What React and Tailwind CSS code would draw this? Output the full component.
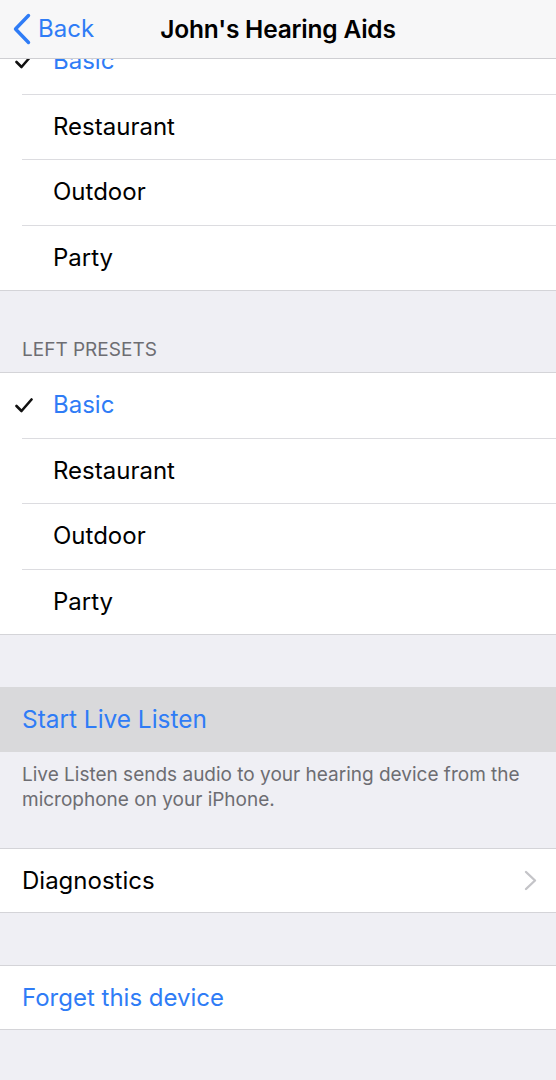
const Check = () => (
  <svg width="18" height="15" viewBox="0 0 18 15" className="shrink-0">
    <path
      d="M1.5 8 L6.5 13 L16.5 1.5"
      fill="none"
      stroke="#111"
      strokeWidth="2.6"
      strokeLinecap="round"
      strokeLinejoin="round"
    />
  </svg>
);

function PresetRow({ label, checked, last }) {
  return (
    <div>
      <div className="flex h-[64.5px] items-center">
        <div className="flex w-[53px] shrink-0 items-center pl-[15px]">
          {checked && <Check />}
        </div>
        <span
          className={
            "text-[24px] " + (checked ? "text-[#2f7cf6]" : "text-black")
          }
        >
          {label}
        </span>
      </div>
      {!last && <div className="ml-[22px] h-px bg-[#dcdce0]" />}
    </div>
  );
}

function PresetGroup({ items, selected }) {
  return (
    <div className="bg-white border-y border-[#d4d4d8]">
      {items.map((p, i) => (
        <PresetRow
          key={p}
          label={p}
          checked={p === selected}
          last={i === items.length - 1}
        />
      ))}
    </div>
  );
}

export default function App() {
  const presets = ["Basic", "Restaurant", "Outdoor", "Party"];

  return (
    <div
      className="relative h-[1080px] w-[556px] overflow-hidden bg-[#efeff4]"
      style={{ fontFamily: "Inter, 'Noto Sans', sans-serif" }}
    >
      {/* Nav bar floats over the scrolled list */}
      <div className="absolute inset-x-0 top-0 z-10 flex h-[59px] items-center border-b border-[#cfcfd3] bg-[#f7f7f8]">
        <div className="flex items-center pl-[12px] text-[#2f7cf6]">
          <svg width="20" height="32" viewBox="0 0 20 32">
            <path
              d="M16.5 2.5 L3.5 16 L16.5 29.5"
              fill="none"
              stroke="#2f7cf6"
              strokeWidth="3.4"
              strokeLinecap="round"
              strokeLinejoin="round"
            />
          </svg>
          <span className="ml-[6px] text-[24px]">Back</span>
        </div>
        <div className="pointer-events-none absolute inset-x-0 text-center">
          <span className="text-[24.5px] font-semibold tracking-[-0.2px] text-black">
            John's Hearing Aids
          </span>
        </div>
      </div>

      {/* Scrolled content */}
      <div className="pt-[28px]">
        <PresetGroup items={presets} selected="Basic" />

        <div className="flex h-[81px] items-end pb-[8px] pl-[22px]">
          <span className="text-[19px] text-[#6d6d72]">LEFT PRESETS</span>
        </div>

        <PresetGroup items={presets} selected="Basic" />

        <div className="h-[52px]" />

        <div className="flex h-[65px] items-center bg-[#d9d9db] pl-[22px]">
          <span className="text-[24.4px] text-[#2f7cf6]">Start Live Listen</span>
        </div>

        <div className="h-[96px] px-[22px] pt-[10px] text-[19px] leading-[25px] text-[#6d6d72]">
          Live Listen sends audio to your hearing device from the microphone on
          your iPhone.
        </div>

        <div className="flex h-[65px] items-center justify-between border-y border-[#d4d4d8] bg-white pl-[22px] pr-[19px]">
          <span className="text-[24px] text-black">Diagnostics</span>
          <svg width="13" height="21" viewBox="0 0 13 21">
            <path
              d="M2 2 L11 10.5 L2 19"
              fill="none"
              stroke="#c4c4c8"
              strokeWidth="2.4"
              strokeLinecap="round"
              strokeLinejoin="round"
            />
          </svg>
        </div>

        <div className="h-[52px]" />

        <div className="flex h-[65px] items-center border-y border-[#d4d4d8] bg-white pl-[22px]">
          <span className="text-[24px] text-[#2f7cf6]">Forget this device</span>
        </div>
      </div>
    </div>
  );
}
